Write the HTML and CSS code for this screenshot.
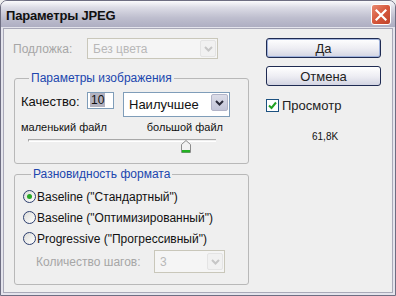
FILE: index.html
```html
<!DOCTYPE html>
<html>

<head>
    <meta name="viewport" content="width=device-width, initial-scale=1">
    <title>Параметры JPEG</title>
    <link rel="stylesheet" href="styles.css">
</head>

<body>
    <div class="window">
        <div class="titlebar">
            <span class="title">Параметры JPEG</span>
            <span class="close">
                <svg width="12" height="12" viewBox="0 0 12 12">
                    <path d="M1.5 1.5 L10.5 10.5 M10.5 1.5 L1.5 10.5" stroke="#fff" stroke-width="2.2" stroke-linecap="square"/>
                </svg>
            </span>
        </div>

        <div class="client">
            <div class="left">
                <div class="matte-row">
                    <span class="matte-label">Подложка:</span>
                    <div class="combo disabled matte">
                        <span class="combo-text">Без цвета</span>
                        <span class="combo-btn">
                            <svg width="9" height="6" viewBox="0 0 9 6"><path d="M1 1 L4.5 4.5 L8 1" fill="none" stroke="#c6c6c6" stroke-width="2"/></svg>
                        </span>
                    </div>
                </div>

                <fieldset class="group image-opts">
                    <legend>Параметры изображения</legend>
                    <div class="quality-row">
                        <span class="quality-label">Качество:</span>
                        <div class="num-box"><span class="sel">10</span></div>
                        <div class="combo quality">
                            <span class="combo-text">Наилучшее</span>
                            <span class="combo-btn">
                                <svg width="9" height="6" viewBox="0 0 9 6"><path d="M1 1 L4.5 4.5 L8 1" fill="none" stroke="#2a2a3a" stroke-width="2"/></svg>
                            </span>
                        </div>
                    </div>
                    <div class="size-row">
                        <span>маленький файл</span>
                        <span>большой файл</span>
                    </div>
                    <div class="slider">
                        <div class="track"></div>
                        <svg class="thumb" width="10" height="13" viewBox="0 0 10 13">
                            <path d="M0.5 4.5 L5 0.5 L9.5 4.5 V12.5 H0.5 Z" fill="#f2f2f2" stroke="#8c8c8c"/>
                            <rect x="1" y="10" width="8" height="2.5" fill="#22b022"/>
                        </svg>
                    </div>
                </fieldset>

                <fieldset class="group format-opts">
                    <legend>Разновидность формата</legend>
                    <label class="radio-row first"><span class="radio checked"></span>Baseline ("Стандартный")</label>
                    <label class="radio-row"><span class="radio"></span>Baseline ("Оптимизированный")</label>
                    <label class="radio-row"><span class="radio"></span>Progressive ("Прогрессивный")</label>
                    <div class="scans-row">
                        <span class="scans-label">Количество шагов:</span>
                        <div class="combo disabled scans">
                            <span class="combo-text">3</span>
                            <span class="combo-btn">
                                <svg width="9" height="6" viewBox="0 0 9 6"><path d="M1 1 L4.5 4.5 L8 1" fill="none" stroke="#c6c6c6" stroke-width="2"/></svg>
                            </span>
                        </div>
                    </div>
                </fieldset>
            </div>

            <div class="right">
                <button class="btn default">Да</button>
                <button class="btn">Отмена</button>
                <label class="check-row">
                    <span class="checkbox">
                        <svg width="9" height="9" viewBox="0 0 9 9"><path d="M1 4.5 L3.5 7 L8 1.5" fill="none" stroke="#21a121" stroke-width="2"/></svg>
                    </span>
                    Просмотр
                </label>
                <div class="filesize">61,8K</div>
            </div>
        </div>
    </div>
</body>

</html>
```

FILE: styles.css
```css
body {
    margin: 0;
    padding: 0;
    font-family: "Liberation Sans", Arial, sans-serif;
    font-size: 12px;
    color: #111;
    background-color: #efefef;
}

.window {
    width: 396px;
    height: 296px;
    box-sizing: border-box;
    border: 1px solid #6e6e82;
    border-radius: 7px 7px 0 0;
    background-color: #e4e4ec;
    display: flex;
    flex-direction: column;
    overflow: hidden;
}

.titlebar {
    height: 26px;
    flex-shrink: 0;
    display: flex;
    align-items: center;
    justify-content: space-between;
    padding: 2px 4px 0 5px;
    box-sizing: border-box;
    background: linear-gradient(#fbfbfd 0%, #dcdce6 25%, #bebece 65%, #aeaec2 100%);
}

.title {
    font-weight: bold;
    font-size: 13px;
    color: #101010;
    letter-spacing: -0.2px;
}

.close {
    width: 20px;
    height: 21px;
    box-sizing: border-box;
    border: 1px solid #fff;
    border-radius: 3px;
    background: linear-gradient(135deg, #e88a72 0%, #d6573c 50%, #c0432a 100%);
    display: flex;
    align-items: center;
    justify-content: center;
    margin-top: -1px;
}

.client {
    flex: 1;
    margin: 1px 2px 2px 2px;
    border: 1px solid #a9a9b8;
    background-color: #efefef;
    display: flex;
}

.left {
    width: 246px;
}

/* matte */
.matte-row {
    display: flex;
    align-items: center;
    margin: 9px 0 0 9px;
}

.matte-label {
    width: 74px;
    color: #a6a6a6;
}

.combo {
    box-sizing: border-box;
    background-color: #fff;
    border: 1px solid #7f9db9;
    display: flex;
    align-items: center;
}

.combo-text {
    flex: 1;
    padding-left: 5px;
}

.combo-btn {
    width: 16px;
    height: 17px;
    box-sizing: border-box;
    margin: 1px;
    display: flex;
    align-items: center;
    justify-content: center;
    border: 1px solid #b2b4c8;
    border-radius: 2px;
    background: linear-gradient(#dcdde8, #c3c5d8);
}

.combo.disabled {
    border-color: #c9c7ba;
    background-color: #f5f5f5;
    color: #b8b8b8;
}

.combo.disabled .combo-btn {
    border-color: #e4e4e4;
    background: #f1f1f1;
}

.matte {
    width: 131px;
    height: 21px;
}

/* group boxes */
.group {
    margin: 0 0 0 10px;
    width: 235px;
    box-sizing: border-box;
    border: 1px solid #b8b8b8;
    border-radius: 3px;
    padding: 0 0 0 6px;
}

.group legend {
    color: #2046ae;
    padding: 0 2px;
    margin-left: 8px;
    font-size: 12px;
}

.image-opts {
    margin-top: 12px;
    height: 93px;
}

.quality-row {
    display: flex;
    align-items: flex-start;
    margin-top: 7px;
    font-size: 13px;
}

.quality-label {
    width: 66px;
    margin-top: 2px;
}

.num-box {
    width: 27px;
    height: 17px;
    box-sizing: border-box;
    border: 1px solid #7f9db9;
    background-color: #fff;
    padding: 0 0 0 2px;
    font-size: 12px;
}

.sel {
    background-color: #b2b2c0;
    padding: 0 1px;
}

.quality {
    margin-left: 9px;
    width: 107px;
    height: 25px;
    align-items: flex-start;
}

.quality .combo-text {
    margin-top: 4px;
}

.quality .combo-btn {
    height: 17px;
    width: 17px;
}

.size-row {
    display: flex;
    justify-content: space-between;
    width: 202px;
    font-size: 11px;
    margin-top: 4px;
}

.slider {
    position: relative;
    width: 188px;
    height: 14px;
    margin: 5px 0 0 7px;
}

.track {
    margin-top: 6px;
    height: 1px;
    border-top: 1px solid #a8a8a8;
    border-bottom: 1px solid #fff;
    border-left: 1px solid #a8a8a8;
}

.thumb {
    position: absolute;
    left: 153px;
    top: 1px;
}

.format-opts {
    margin-top: 3px;
    height: 118px;
    padding-left: 8px;
}

.radio-row {
    display: flex;
    align-items: center;
    height: 21px;
}

.radio-row.first {
    margin-top: 5px;
}

.radio {
    width: 13px;
    height: 13px;
    box-sizing: border-box;
    border: 1px solid #2c3e6e;
    border-radius: 50%;
    background: linear-gradient(135deg, #dcdcd8, #ffffff);
    margin-right: 1px;
    display: flex;
    align-items: center;
    justify-content: center;
}

.radio.checked::after {
    content: "";
    width: 5px;
    height: 5px;
    border-radius: 50%;
    background: #28a828;
}

.scans-row {
    display: flex;
    align-items: center;
    margin: 1px 0 0 13px;
}

.scans-label {
    width: 118px;
    color: #a6a6a6;
}

.scans {
    width: 71px;
    height: 23px;
}

/* right column */
.right {
    flex: 1;
    padding: 9px 0 0 16px;
}

.btn {
    display: block;
    width: 115px;
    height: 20px;
    box-sizing: border-box;
    margin-bottom: 8px;
    border: 1px solid #1f2b52;
    border-radius: 3px;
    background: linear-gradient(#ffffff 0%, #ececf2 55%, #d2d4e2 100%);
    font-family: "Liberation Sans", Arial, sans-serif;
    font-size: 13px;
    padding: 0;
    color: #222;
}

.btn.default {
    box-shadow: inset 0 0 0 1px #9fb2dc;
}

.check-row {
    display: flex;
    align-items: center;
    margin-top: 12px;
    font-size: 13px;
    color: #222;
}

.checkbox {
    width: 13px;
    height: 13px;
    box-sizing: border-box;
    border: 1px solid #1c5180;
    background: #fff;
    display: flex;
    align-items: center;
    justify-content: center;
    margin-right: 3px;
}

.filesize {
    font-size: 10px;
    margin: 18px 0 0 46px;
}
```
